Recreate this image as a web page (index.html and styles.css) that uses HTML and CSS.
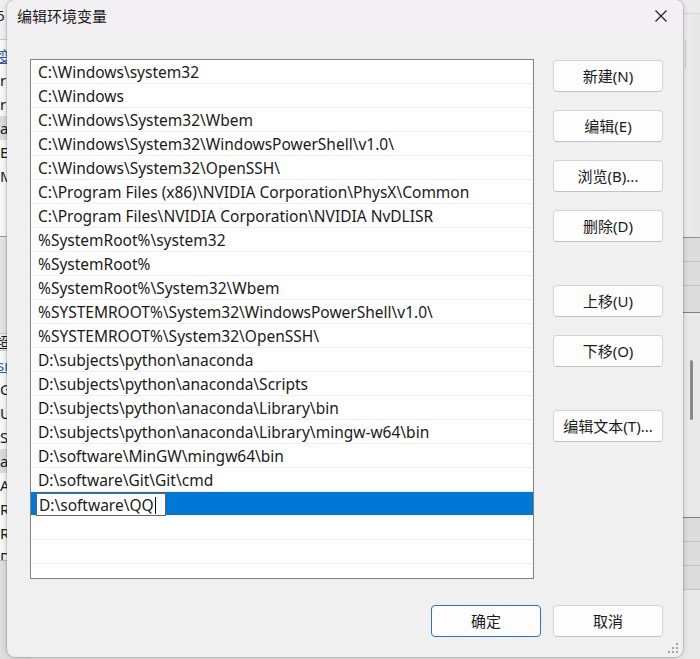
FILE: index.html
```html
<!DOCTYPE html>
<html lang="zh-CN">
<head>
<meta charset="utf-8">
<title>编辑环境变量</title>
<link rel="stylesheet" href="styles.css">
</head>
<body>
<div class="desktop">
  <div class="bg-left">
    <div class="bl-head"><span class="bl-t">6</span></div>
    <div class="bl-list">
      <div class="bl-row link">变量</div>
      <div class="bl-row">r</div>
      <div class="bl-row">r</div>
      <div class="bl-row hl">a</div>
      <div class="bl-row">E</div>
      <div class="bl-row">M</div>
      <div class="bl-fill"></div>
    </div>
    <div class="bl-gap"></div>
    <div class="bl-head2">超</div>
    <div class="bl-list2">
      <div class="bl-row link">sr</div>
      <div class="bl-row">G</div>
      <div class="bl-row">U</div>
      <div class="bl-row">S</div>
      <div class="bl-row hl">a</div>
      <div class="bl-row">A</div>
      <div class="bl-row">R</div>
      <div class="bl-row">R</div>
      <div class="bl-row">D</div>
    </div>
    <div class="bl-bottom"></div>
  </div>

  <div class="bg-right">
    <div class="br-top"></div>
    <div class="br-pane">
      <div class="br-vline"></div>
      <div class="br-block"></div>
    </div>
    <div class="br-band"></div>
    <div class="br-band"></div>
    <div class="br-band short"></div>
    <div class="br-pane2">
      <div class="br-track"><div class="br-thumb"></div></div>
    </div>
    <div class="br-band"></div>
    <div class="br-band"></div>
    <div class="br-band"></div>
  </div>

  <div class="dialog">
    <div class="titlebar">
      <span class="title">编辑环境变量</span>
      <svg class="close" width="12" height="12" viewBox="0 0 12 12"><path d="M0.5 0.5 L11.5 11.5 M11.5 0.5 L0.5 11.5" stroke="#1b1b1b" stroke-width="1.1" fill="none"/></svg>
    </div>
    <div class="content">
      <div class="main">
        <div class="list">
          <div class="row">C:\Windows\system32</div>
          <div class="row">C:\Windows</div>
          <div class="row">C:\Windows\System32\Wbem</div>
          <div class="row">C:\Windows\System32\WindowsPowerShell\v1.0\</div>
          <div class="row">C:\Windows\System32\OpenSSH\</div>
          <div class="row">C:\Program Files (x86)\NVIDIA Corporation\PhysX\Common</div>
          <div class="row">C:\Program Files\NVIDIA Corporation\NVIDIA NvDLISR</div>
          <div class="row">%SystemRoot%\system32</div>
          <div class="row">%SystemRoot%</div>
          <div class="row">%SystemRoot%\System32\Wbem</div>
          <div class="row">%SYSTEMROOT%\System32\WindowsPowerShell\v1.0\</div>
          <div class="row">%SYSTEMROOT%\System32\OpenSSH\</div>
          <div class="row">D:\subjects\python\anaconda</div>
          <div class="row">D:\subjects\python\anaconda\Scripts</div>
          <div class="row">D:\subjects\python\anaconda\Library\bin</div>
          <div class="row">D:\subjects\python\anaconda\Library\mingw-w64\bin</div>
          <div class="row">D:\software\MinGW\mingw64\bin</div>
          <div class="row">D:\software\Git\Git\cmd</div>
          <div class="row selected">
            <div class="editbox"><span class="edittext">D:\software\QQ</span><span class="caret"></span></div>
          </div>
          <div class="row"></div>
          <div class="row"></div>
          <div class="row"></div>
        </div>
        <div class="side">
          <button class="btn">新建(N)</button>
          <button class="btn">编辑(E)</button>
          <button class="btn">浏览(B)...</button>
          <button class="btn">删除(D)</button>
          <button class="btn group">上移(U)</button>
          <button class="btn">下移(O)</button>
          <button class="btn group">编辑文本(T)...</button>
        </div>
      </div>
      <div class="footer">
        <button class="btn default">确定</button>
        <button class="btn">取消</button>
      </div>
    </div>
    <svg class="grip" width="12" height="12" viewBox="0 0 12 12">
      <rect x="9" y="0" width="2" height="2" fill="#a3a3a3"/>
      <rect x="5" y="4" width="2" height="2" fill="#a3a3a3"/>
      <rect x="9" y="4" width="2" height="2" fill="#a3a3a3"/>
      <rect x="1" y="8" width="2" height="2" fill="#a3a3a3"/>
      <rect x="5" y="8" width="2" height="2" fill="#a3a3a3"/>
      <rect x="9" y="8" width="2" height="2" fill="#a3a3a3"/>
    </svg>
  </div>
</div>
</body>
</html>
```

FILE: styles.css
```css
* { box-sizing: border-box; }

html, body {
  margin: 0;
  padding: 0;
}

body {
  width: 700px;
  height: 659px;
  overflow: hidden;
  font-family: "Noto Sans", "Noto Sans CJK SC", sans-serif;
  font-size: 15px;
  color: #1a1a1a;
}

.desktop {
  position: relative;
  width: 700px;
  height: 659px;
  background: #e4e4e4;
  display: flex;
  justify-content: space-between;
  overflow: hidden;
}

/* ---------- background window, left edge ---------- */
.bg-left {
  width: 30px;
  display: flex;
  flex-direction: column;
  background: #e6e6e6;
  font-size: 15px;
  line-height: 24px;
  color: #1a1a1a;
}
.bl-head {
  height: 40px;
  background: #f0f0f0;
  border-bottom: 1px solid #c9c9c9;
  padding-top: 3px;
}
.bl-t { margin-left: -4px; }
.bl-list {
  background: #f7f7f7;
  height: 197px;
  padding-top: 4px;
  border-bottom: 1px solid #9a9a9a;
}
.bl-row { height: 24px; white-space: nowrap; padding-left: 0; }
.bl-row.link { color: #2f5e9e; text-decoration: underline; margin-left: -3px; }
.bl-row.hl { background: #dadada; }
.bl-gap { height: 97px; background: #e3e3e3; border-bottom: 1px solid #c9c9c9; }
.bl-head2 { height: 17px; line-height: 17px; background: #ececec; border-bottom: 1px solid #c9c9c9; margin-left: -6px; }
.bl-list2 {
  background: #f7f7f7;
  height: 210px;
  padding-top: 2px;
  overflow: hidden;
  border-bottom: 1px solid #b5b5b5;
}
.bl-bottom { flex: 1; background: #dedede; }

/* ---------- background window, right edge ---------- */
.bg-right {
  width: 24px;
  display: flex;
  flex-direction: column;
  background: #e9e9e9;
}
.br-top { height: 14px; background: #ebebeb; border-bottom: 1px solid #d6d6d6; }
.br-pane {
  height: 224px;
  background: linear-gradient(to right, #f0f0f0, #e6e6e6);
  border-bottom: 1px solid #8f8f8f;
  padding-left: 9px;
  padding-top: 26px;
  display: flex;
  flex-direction: column;
}
.br-vline { width: 1px; height: 28px; background: #c8c8c8; }
.br-block { width: 5px; height: 25px; margin-left: -9px; margin-top: 47px; background: #dedede; }
.br-band { height: 24px; background: #dcdcdc; border-bottom: 1px solid #c4c4c4; }
.br-band.short { height: 27px; border-bottom: 1px solid #7e7e7e; }
.br-pane2 {
  height: 205px;
  background: #e3e3e3;
  border-bottom: 1px solid #7e7e7e;
  padding-left: 6px;
}
.br-track { height: 100%; background: #e9e9e9; padding-left: 8px; padding-top: 47px; }
.br-thumb { width: 3px; height: 60px; border-radius: 2px; background: #8a8a8a; }

/* ---------- dialog ---------- */
.dialog {
  position: absolute;
  left: 7px;
  top: 0;
  width: 676px;
  height: 657px;
  background: #f0f0f0;
  border-radius: 8px;
  box-shadow: 0 0 0 1px rgba(0,0,0,0.12), 0 0 6px rgba(0,0,0,0.18);
  display: flex;
  flex-direction: column;
  overflow: hidden;
}

.titlebar {
  height: 33px;
  background: #f3f0f3;
  display: flex;
  align-items: center;
  justify-content: space-between;
  padding: 0 16px 2px 10px;
}
.title {
  font-size: 15px;
  color: #1a1a1a;
  letter-spacing: 0;
}
.close { display: block; margin-top: 1px; }

.content {
  flex: 1;
  display: flex;
  flex-direction: column;
  padding: 26px 20px 20px 23px;
}

.main {
  display: flex;
  gap: 19px;
}

.list {
  width: 504px;
  height: 520px;
  background: #ffffff;
  border: 1px solid #828282;
  overflow: hidden;
  display: flex;
  flex-direction: column;
  font-size: 15.5px;
}

.row {
  flex: none;
  height: 24px;
  line-height: 23px;
  padding-top: 1px;
  border-bottom: 1px solid #efefef;
  padding-left: 7px;
  white-space: nowrap;
  color: #1a1a1a;
}

.row.selected {
  background: #0078d7;
  border-bottom: 1px solid #ffffff;
  padding: 0 1px 0 5px;
  display: flex;
}

.editbox {
  width: 130px;
  height: 23px;
  margin-top: 1px;
  background: #ffffff;
  border: 1px solid #646464;
  padding-left: 2px;
  padding-top: 1px;
  display: flex;
  align-items: center;
  line-height: 21px;
}
.caret {
  display: inline-block;
  width: 1px;
  height: 17px;
  background: #000000;
  margin-left: 1px;
}

.side {
  display: flex;
  flex-direction: column;
  gap: 18px;
  padding-top: 1px;
}

.btn {
  width: 110px;
  height: 32px;
  padding: 0;
  font-family: "Noto Sans", "Noto Sans CJK SC", sans-serif;
  font-size: 15px;
  color: #1a1a1a;
  background: #fdfdfd;
  border: 1px solid #d3d3d3;
  border-bottom-color: #c2c2c2;
  border-radius: 4px;
  line-height: 28px;
}
.btn.group { margin-top: 25px; }
.btn.default { border: 1px solid #2f74b8; }

.footer {
  display: flex;
  justify-content: flex-end;
  gap: 12px;
  margin-top: 26px;
}

.grip {
  position: absolute;
  right: 4px;
  bottom: 2px;
}
```
